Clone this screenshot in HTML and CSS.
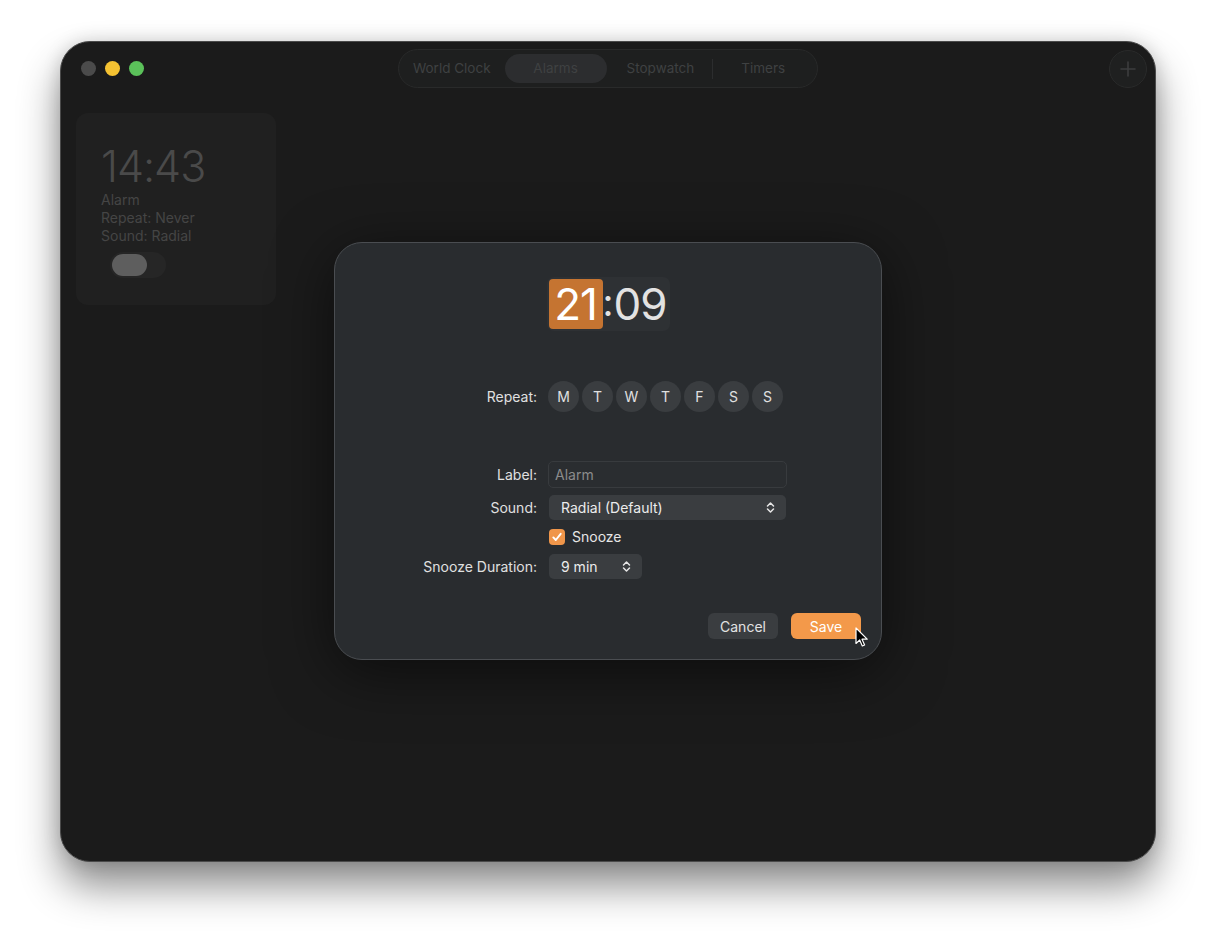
FILE: index.html
```html
<!DOCTYPE html>
<html lang="en">
<head>
    <meta charset="UTF-8">
    <meta name="viewport" content="width=device-width, initial-scale=1.0">
    <title>Clock - Alarms</title>
    <link rel="stylesheet" href="styles.css">
</head>
<body>

    <div class="window">
        <div class="titlebar">
            <div class="traffic">
                <span class="light light-close"></span>
                <span class="light light-min"></span>
                <span class="light light-max"></span>
            </div>
            <div class="tabs">
                <span class="tab tab-world">World Clock</span>
                <span class="tab active">Alarms</span>
                <span class="tab tab-stop">Stopwatch</span>
                <span class="tab-sep"></span>
                <span class="tab tab-timers">Timers</span>
            </div>
            <div class="title-actions">
                <button class="add-btn" aria-label="Add alarm">
                    <svg width="18" height="18" viewBox="0 0 18 18"><path d="M9 2v14M2 9h14" stroke="#3c3d3e" stroke-width="1.6" stroke-linecap="round"/></svg>
                </button>
            </div>
        </div>

        <div class="alarm-list">
            <div class="alarm-card">
                <div class="alarm-time">14:43</div>
                <div class="alarm-meta">Alarm</div>
                <div class="alarm-meta">Repeat: Never</div>
                <div class="alarm-meta">Sound: Radial</div>
                <div class="toggle"><span class="knob"></span></div>
            </div>
        </div>

        <!-- edit sheet -->
        <div class="sheet">
            <div class="time-row">
                <div class="time-field">
                    <span class="time-part selected">21</span><span class="time-colon">:</span><span class="time-part">09</span>
                </div>
            </div>

            <div class="form">
                <div class="form-label repeat-label">Repeat:</div>
                <div class="days repeat-label">
                    <span class="day">M</span>
                    <span class="day">T</span>
                    <span class="day">W</span>
                    <span class="day">T</span>
                    <span class="day">F</span>
                    <span class="day">S</span>
                    <span class="day">S</span>
                </div>

                <div class="form-label label-row">Label:</div>
                <div class="label-row"><input class="text-input" type="text" placeholder="Alarm"></div>

                <div class="form-label">Sound:</div>
                <div class="select wide">
                    <span>Radial (Default)</span>
                    <svg width="9" height="13" viewBox="0 0 9 13"><path d="M1.5 5L4.5 2L7.5 5M1.5 8L4.5 11L7.5 8" fill="none" stroke="#e6e6e6" stroke-width="1.5" stroke-linecap="round" stroke-linejoin="round"/></svg>
                </div>

                <div></div>
                <label class="check">
                    <span class="check-box">
                        <svg width="12" height="12" viewBox="0 0 12 12"><path d="M2.3 6.4L4.8 9L9.7 2.8" fill="none" stroke="#fff" stroke-width="1.9" stroke-linecap="round" stroke-linejoin="round"/></svg>
                    </span>
                    Snooze
                </label>

                <div class="form-label">Snooze Duration:</div>
                <div class="select narrow">
                    <span>9 min</span>
                    <svg width="9" height="13" viewBox="0 0 9 13"><path d="M1.5 5L4.5 2L7.5 5M1.5 8L4.5 11L7.5 8" fill="none" stroke="#e6e6e6" stroke-width="1.5" stroke-linecap="round" stroke-linejoin="round"/></svg>
                </div>
            </div>

            <div class="sheet-actions">
                <button class="btn">Cancel</button>
                <button class="btn btn-primary">Save</button>
                <svg class="cursor" width="14" height="21" viewBox="0 0 14 21"><path d="M1 1L1 16.5L4.7 13L7.3 19L9.6 18L7 12.2L12.2 12.2Z" fill="#000" stroke="#fff" stroke-width="1.2" stroke-linejoin="round"/></svg>
            </div>
        </div>
    </div>

</body>
</html>
```

FILE: styles.css
```css
html {
    background-color: #fff;
}
body {
    margin: 0;
    padding: 41px 60px;
    min-height: 942px;
    box-sizing: border-box;
    background-color: #fff;
    font-family: Inter, "Noto Sans", "Liberation Sans", sans-serif;
    -webkit-font-smoothing: antialiased;
}

.window {
    position: relative;
    height: 819px;
    background-color: #1b1b1b;
    border: 1px solid #4a4a4a;
    border-radius: 30px;
    box-shadow: 0 24px 40px rgba(0, 0, 0, 0.45), 0 0 18px rgba(0, 0, 0, 0.15);
    overflow: hidden;
}

/* title bar */
.titlebar {
    display: grid;
    grid-template-columns: 1fr auto 1fr;
    align-items: center;
    padding: 7px 8px 0;
}
.traffic {
    display: flex;
    gap: 9px;
    padding-left: 12px;
}
.light {
    width: 15px;
    height: 15px;
    border-radius: 50%;
}
.light-close { background-color: #4b4b4b; }
.light-min { background-color: #f5c232; }
.light-max { background-color: #5bc15a; }

.tabs {
    display: flex;
    align-items: center;
    height: 37px;
    padding: 0 4px;
    background-color: #1e1f1f;
    border: 1px solid #292a2a;
    border-radius: 20px;
}
.tab {
    height: 29px;
    line-height: 29px;
    font-size: 13.5px;
    color: #3f4142;
    border-radius: 15px;
    white-space: nowrap;
}
.tab-world { padding: 0 14px 0 10px; }
.tab.active {
    width: 102px;
    text-align: center;
    background-color: #2c2d2f;
}
.tab-stop { padding: 0 18px 0 20px; }
.tab-timers { padding: 0 28px 0 28px; }
.tab-sep {
    width: 1px;
    height: 20px;
    background-color: #2c2d2e;
}

.title-actions {
    display: flex;
    justify-content: flex-end;
}
.add-btn {
    width: 38px;
    height: 38px;
    display: flex;
    align-items: center;
    justify-content: center;
    padding: 0;
    background-color: #1f2020;
    border: 1px solid #2a2b2b;
    border-radius: 50%;
}

/* alarm list */
.alarm-list {
    display: flex;
    padding: 25px 15px;
}
.alarm-card {
    width: 200px;
    height: 192px;
    box-sizing: border-box;
    padding: 28px 25px;
    background-color: #202020;
    border-radius: 12px;
}
.alarm-time {
    font-size: 43px;
    font-weight: 300;
    line-height: 50px;
    color: #4a4a4a;
    letter-spacing: -1px;
}
.alarm-meta {
    font-size: 14px;
    line-height: 18px;
    color: #454545;
}
.toggle {
    width: 56px;
    height: 26px;
    margin: 7px 0 0 9px;
    padding: 2px;
    box-sizing: border-box;
    background-color: #262626;
    border-radius: 13px;
}
.knob {
    display: block;
    width: 35px;
    height: 22px;
    background-color: #5e5e5e;
    border-radius: 11px;
}

/* edit sheet */
.sheet {
    position: absolute;
    left: 273px;
    top: 200px;
    width: 548px;
    height: 418px;
    box-sizing: border-box;
    padding: 34px 20px 20px 0;
    background-color: #292c2f;
    border: 1px solid #4a4d51;
    border-radius: 28px;
    box-shadow: 0 12px 60px rgba(0, 0, 0, 0.55);
    display: flex;
    flex-direction: column;
}
.time-row {
    display: flex;
    justify-content: center;
    padding-left: 20px;
}
.time-field {
    display: flex;
    align-items: center;
    padding: 2px 3px 2px 2px;
    background-color: #2e3134;
    border-radius: 7px;
}
.time-part {
    height: 50px;
    line-height: 50px;
    font-size: 44px;
    font-weight: 400;
    color: #e2e2e2;
    letter-spacing: -1px;
}
.time-part.selected {
    width: 54px;
    text-align: center;
    background-color: #c57431;
    color: #fff;
    border-radius: 4px;
}
.time-colon {
    font-size: 38px;
    line-height: 50px;
    color: #e2e2e2;
    margin: -4px 0 0 0;
}

.form {
    display: grid;
    grid-template-columns: 202px auto;
    column-gap: 11px;
    row-gap: 8px;
    align-items: center;
    margin-top: 50px;
    font-size: 14px;
    color: #e0e0e0;
}
.form-label {
    text-align: right;
}
.repeat-label {
    margin-bottom: 41px;
}
.days {
    display: flex;
    gap: 3px;
}
.day {
    width: 31px;
    height: 31px;
    line-height: 31px;
    text-align: center;
    background-color: #3a3d40;
    border-radius: 50%;
    color: #e0e0e0;
}
.label-row {
    margin-bottom: -1px;
}
.text-input {
    display: block;
    width: 239px;
    height: 27px;
    box-sizing: border-box;
    padding: 0 6px;
    background-color: #2a2d30;
    border: 1px solid #383b3e;
    border-radius: 5px;
    font-family: inherit;
    font-size: 14px;
    color: #e0e0e0;
    outline: none;
}
.text-input::placeholder {
    color: #8a8b8c;
}
.select {
    display: flex;
    align-items: center;
    justify-content: space-between;
    height: 25px;
    box-sizing: border-box;
    padding: 0 11px 0 12px;
    margin-left: 1px;
    background-color: #3a3d40;
    border-radius: 5px;
    color: #ececec;
}
.select.wide { width: 237px; }
.select.narrow { width: 93px; }
.check {
    display: flex;
    align-items: center;
    gap: 7px;
    margin: 0 0 1px 1px;
    color: #e6e6e6;
}
.check-box {
    width: 16px;
    height: 16px;
    display: flex;
    align-items: center;
    justify-content: center;
    background-color: #f0964a;
    border-radius: 4px;
}

.sheet-actions {
    position: relative;
    display: flex;
    justify-content: flex-end;
    gap: 13px;
    margin-top: auto;
}
.btn {
    width: 70px;
    height: 26px;
    padding: 0;
    background-color: #3a3d40;
    border: none;
    border-radius: 6px;
    font-family: inherit;
    font-size: 14px;
    color: #e2e2e2;
}
.btn-primary {
    background-color: #f3994a;
    color: #fff;
}
.cursor {
    position: absolute;
    right: -8px;
    top: 14px;
}
```
